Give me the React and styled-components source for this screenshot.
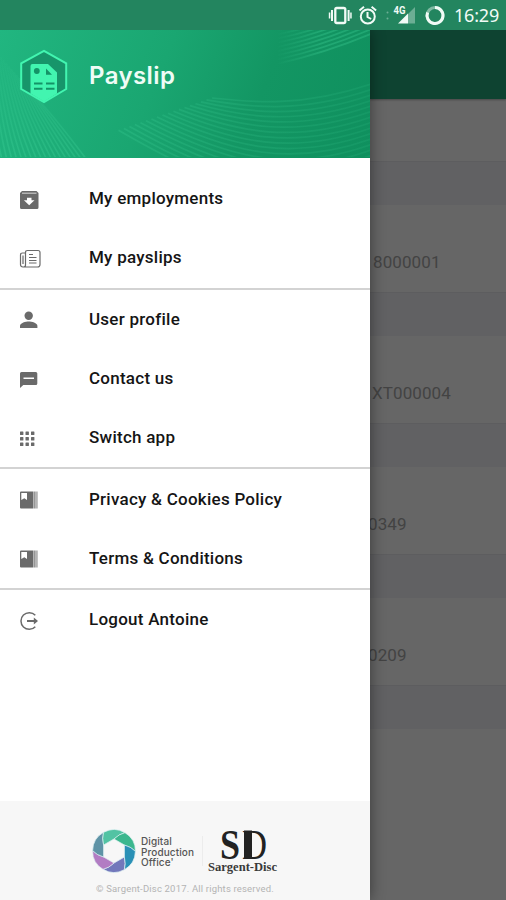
import React from 'react';
import styled, { createGlobalStyle } from 'styled-components';

const GlobalStyle = createGlobalStyle`
  * {
    box-sizing: border-box;
  }
  body {
    margin: 0;
    font-family: Roboto, sans-serif;
  }
`;

const StyledPhone = styled.div`
  width: 506px;
  height: 900px;
  display: flex;
  flex-direction: column;
  overflow: hidden;
`;

const StyledStatusBar = styled.header`
  height: 30px;
  flex: none;
  display: flex;
  align-items: center;
  justify-content: flex-end;
  gap: 8px;
  padding: 0 7px 0 0;
  background-color: #23855f;
  color: #f1fbf6;
  z-index: 2;

  svg {
    display: block;
  }
`;

const StyledClock = styled.span`
  font-family: 'Noto Sans', sans-serif;
  font-size: 18px;
  line-height: 30px;
  width: 45px;
  white-space: nowrap;
  letter-spacing: -0.2px;
`;

const StyledBody = styled.div`
  flex: 1;
  display: flex;
  min-height: 0;
`;

const StyledDrawer = styled.aside`
  width: 370px;
  flex: none;
  display: flex;
  flex-direction: column;
  background-color: #fff;
  box-shadow: 0 0 14px rgba(0, 0, 0, 0.45);
  z-index: 1;
`;

const StyledBanner = styled.div`
  position: relative;
  height: 127.5px;
  display: flex;
  align-items: flex-start;
  padding: 19px 0 0 19px;
  background: linear-gradient(112deg, #21b680 0%, #1aa671 42%, #139663 68%, #0f905e 100%);
`;

const StyledWaves = styled.svg`
  position: absolute;
  left: 0;
  top: 0;
`;

const StyledLogo = styled.svg`
  position: relative;
  flex: none;
`;

const StyledTitle = styled.h1`
  position: relative;
  margin: 11px 0 0 20px;
  font-family: Inter, sans-serif;
  font-size: 24px;
  font-weight: 600;
  line-height: 32px;
  letter-spacing: 0.4px;
  color: #effcf6;
`;

const StyledNav = styled.nav`
  flex: 1;
  padding-top: 11.5px;
`;

const StyledGroup = styled.div`
  border-bottom: ${({ $last }) => ($last ? 'none' : '2px solid #d3d3d3')};
`;

const StyledItem = styled.a`
  height: 59.3px;
  display: flex;
  align-items: center;
  padding: 0 0 1px 19px;
  color: #151515;
  font-size: 17px;
  font-weight: 500;
  letter-spacing: 0.25px;

  svg {
    flex: none;
    margin: 3px 48px 0 0;
    color: #6a6a6a;
  }
`;

const StyledFooter = styled.footer`
  height: 99px;
  flex: none;
  display: flex;
  flex-direction: column;
  background-color: #f7f7f7;
  padding: 28px 0 0 92px;
`;

const StyledBrands = styled.div`
  display: flex;
  height: 47px;
`;

const StyledOffice = styled.div`
  margin: 7px 0 0 5px;
  width: 61px;
  font-family: Inter, sans-serif;
  font-size: 10px;
  font-weight: 500;
  line-height: 10.6px;
  letter-spacing: 0.1px;
  color: #555;
`;

const StyledRule = styled.div`
  width: 1px;
  height: 30px;
  margin: 7px 6px 0 0;
  background-color: #ececec;
`;

const StyledCopyright = styled.small`
  margin: 7px 0 0 4px;
  font-size: 9.5px;
  line-height: 12px;
  letter-spacing: 0.18px;
  color: #b4b4b4;
  white-space: nowrap;
`;

const StyledContent = styled.main`
  flex: 1;
  min-width: 0;
  display: flex;
  flex-direction: column;
  background-color: #666;
`;

const StyledToolbar = styled.div`
  height: 69px;
  background-color: #0e4331;
  box-shadow: 0 1px 2px rgba(0, 0, 0, 0.3);
`;

const StyledSpacer = styled.div`
  height: 62px;
`;

const StyledBand = styled.div`
  height: 44px;
  background-color: #616163;
  border-top: 1px solid #5d5d5f;
`;

const StyledRecord = styled.div`
  height: 87px;
  padding-top: 26.5px;
  text-indent: ${({ $indent }) => $indent}px;
  font-size: 17px;
  line-height: 60px;
  letter-spacing: 0.1px;
  color: #434343;
`;

const records = [
  { id: '8000001', indent: 3 },
  { id: 'XT000004', indent: 2 },
  { id: '0349', indent: -2 },
  { id: '0209', indent: -2 },
];

const Icon = ({ children }) => (
  <svg width="22" height="20" viewBox="0 0 22 20" fill="currentColor">
    {children}
  </svg>
);

const EmploymentsIcon = () => (
  <Icon>
    <path
      fillRule="evenodd"
      d="M3 1h14.5L19.500 3v14.500a1.500 1.500 0 0 1-1.500 1.500H2.500A1.500 1.500 0 0 1 1 17.500V3zM3 2.700h14.500v0.800H3zM8 7.800v2.400H4.900l5.300 5 5.300-5H12.500v-2.400z"
    />
  </Icon>
);

const PayslipsIcon = () => (
  <Icon>
    <g fill="none" stroke="currentColor" strokeWidth="1.200">
      <path d="M6.500 16.500V3.500Q6.500 1.500 8.500 1.500H19Q21 1.500 21 3.500V15.500Q21 18 18.500 18H4Q1.500 18 1.500 15.500V6Q1.500 4 3.500 4H6.500M6.500 16Q6.500 18 4.500 18M4 6.500V15" />
      <path d="M10 5.500h4M10 8.500h7.500M10 11.500h7.500M10 14h7.500" />
    </g>
  </Icon>
);

const ProfileIcon = () => (
  <Icon>
    <circle cx="9.700" cy="5.700" r="4.200" />
    <path d="M1 18v-2.200c0-2.900 5.800-4.300 8.700-4.300s8.700 1.400 8.700 4.300V18z" />
  </Icon>
);

const ContactIcon = () => (
  <Icon>
    <path
      fillRule="evenodd"
      d="M2.500 2h14.300a1.500 1.500 0 0 1 1.500 1.500v10a1.500 1.500 0 0 1-1.500 1.500H4.300L1 18V3.500A1.500 1.500 0 0 1 2.500 2zM4.500 7.600v1.300h10.500v-1.300z"
    />
  </Icon>
);

const AppsIcon = () => (
  <Icon>
    {[2.5, 8, 13.5].map(y =>
      [1, 6.5, 12].map(x => (
        <rect key={`${x}-${y}`} x={x} y={y} width="3.400" height="3.400" rx="0.500" />
      ))
    )}
  </Icon>
);

const BookIcon = () => (
  <Icon>
    <path
      fillRule="evenodd"
      d="M2 1.500h12.500v17H2a1 1 0 0 1-1-1v-15a1 1 0 0 1 1-1zM2.300 3v7l3-1.800 2.700 1.800V3z"
    />
    <path d="M15.300 1.500h1.200v17h-1.200zM17.500 1.500h0.900v17h-0.900z" />
  </Icon>
);

const LogoutIcon = () => (
  <Icon>
    <g fill="none" stroke="currentColor" strokeWidth="1.500">
      <path d="M16.300 4.300A8.300 8.300 0 1 0 16.300 15.700" />
      <path d="M8 10h8" strokeWidth="2" />
    </g>
    <path d="M14.800 6.500L19 10l-4.200 3.500z" />
  </Icon>
);

const menu = [
  [
    { label: 'My employments', icon: EmploymentsIcon },
    { label: 'My payslips', icon: PayslipsIcon },
  ],
  [
    { label: 'User profile', icon: ProfileIcon },
    { label: 'Contact us', icon: ContactIcon },
    { label: 'Switch app', icon: AppsIcon },
  ],
  [
    { label: 'Privacy & Cookies Policy', icon: BookIcon },
    { label: 'Terms & Conditions', icon: BookIcon },
  ],
  [{ label: 'Logout Antoine', icon: LogoutIcon }],
];

const range = n => Array.from({ length: n }, (_, i) => i);

const Waves = () => (
  <StyledWaves width="370" height="127" viewBox="0 0 370 127" fill="none">
    <defs>
      <linearGradient id="fadeDown" x1="0" y1="0" x2="0" y2="127" gradientUnits="userSpaceOnUse">
        <stop offset="0.100" stopColor="#4be0a5" stopOpacity="0" />
        <stop offset="1" stopColor="#4be0a5" stopOpacity="0.240" />
      </linearGradient>
      <linearGradient id="fadeRight" x1="115" y1="0" x2="370" y2="0" gradientUnits="userSpaceOnUse">
        <stop offset="0" stopColor="#4be0a5" stopOpacity="0.180" />
        <stop offset="1" stopColor="#4be0a5" stopOpacity="0.100" />
      </linearGradient>
      <linearGradient id="fadeTop" x1="276" y1="0" x2="320" y2="0" gradientUnits="userSpaceOnUse">
        <stop offset="0" stopColor="#4be0a5" stopOpacity="0" />
        <stop offset="1" stopColor="#4be0a5" stopOpacity="0.260" />
      </linearGradient>
    </defs>
    <g stroke="url(#fadeDown)" strokeWidth="1.600">
      {range(18).map(i => (
        <path key={i} d={`M${i * 2.6 - 12} ${12 + i * 3}Q${i * 3.6 - 8} 85 ${i * 5 + 2} 130`} />
      ))}
    </g>
    <g stroke="url(#fadeRight)" strokeWidth="1.700">
      {range(18).map(i => (
        <path
          key={i}
          d={`M${212 - i * 5.5} ${68 + i * 1.9}C${250 - i * 2} ${72 + i * 5} ${300 - i} ${78 + i * 6} 371 ${54 + i * 5.5}`}
        />
      ))}
    </g>
    <g stroke="url(#fadeTop)" strokeWidth="1.800">
      {range(9).map(i => (
        <path key={i} d={`M278 ${i * 4.2}Q325 ${i * 4 - 9} 371 ${i * 4.6 - 33}`} />
      ))}
    </g>
  </StyledWaves>
);

const PayslipLogo = () => (
  <StyledLogo width="50" height="56" viewBox="0 0 50 56">
    <path d="M25 1.800L47.200 14.300V40L25 53L2.200 40V14.300z" fill="#17956a" stroke="#42f5b0" strokeWidth="2" />
    <path d="M11.500 44.500V17q0-2 2-2H29L38 23.500V44.500L25 52.500z" fill="#42f5b0" />
    <circle cx="17.800" cy="22" r="2.900" fill="#149367" />
    <path d="M27 19.500v6.300h6z" fill="#149367" />
    <g stroke="#149367" strokeWidth="1.900">
      <path d="M15 34.500h8.500M27 34.500h8.500M15 39.800h8.500M27 39.800h8.500" />
    </g>
  </StyledLogo>
);

// clockwise from the bottom
const blades = ['#7278bb', '#b27cc3', '#5f93a6', '#52c3a3', '#3bb78e', '#2a90b6'];

const Aperture = () => (
  <svg width="44" height="44" viewBox="-22 -22 44 44">
    {blades.map((color, i) => (
      <path
        key={color}
        d="M12 0Q17 5 18.350 11A21.400 21.400 0 0 1 -0.350 21.400Q4 17 6 10.400z"
        fill={color}
        stroke="#dff0f2"
        strokeWidth="0.700"
        transform={`rotate(${i * 60 + 30})`}
      />
    ))}
  </svg>
);

const StyledSargent = styled.svg`
  overflow: visible;
`;

const SargentDisc = () => (
  <StyledSargent width="70" height="47" viewBox="0 0 70 47" fontFamily="Liberation Serif, serif" fill="#222">
    <text x="11" y="30" fontSize="42" fontWeight="700" textLength="20" lengthAdjust="spacingAndGlyphs">
      S
    </text>
    <text x="33" y="30" fontSize="43" textLength="25" lengthAdjust="spacingAndGlyphs">
      D
    </text>
    <rect x="35" y="1.500" width="8" height="28.500" />
    <text x="-1" y="42" fontSize="12.500" fontWeight="700" fill="#3a3a3a" textLength="69" lengthAdjust="spacingAndGlyphs">
      Sargent-Disc
    </text>
  </StyledSargent>
);

const StatusIcons = () => (
  <svg width="118" height="28" viewBox="328 1 118 28" fill="currentColor">
    {/* vibrate */}
    <rect x="335.300" y="8" width="10" height="15" rx="1.500" fill="none" stroke="currentColor" strokeWidth="2.300" />
    <path d="M331 10h2v11H331zM328.800 12.500h1.500v6h-1.500zM347.600 10h2v11h-2zM350.200 12.500h1.500v6h-1.500z" />
    {/* alarm */}
    <g fill="none" stroke="currentColor" strokeWidth="2">
      <circle cx="367.800" cy="16.500" r="7" />
      <path d="M359.500 10.500l4.500-3.700M371.600 6.800l4.500 3.700M367.500 12v5l3.600 2" />
    </g>
    <g opacity="0.350">
      <circle cx="387.500" cy="12.500" r="1" />
      <circle cx="387.500" cy="18.500" r="1" />
      <path d="M415 7v16.500h-7V14z" />
    </g>
    <path d="M398 23.500L408 13.500v10z" />
    <text x="393.500" y="14.300" fontFamily="Roboto, sans-serif" fontSize="10" fontWeight="700" textLength="12" lengthAdjust="spacingAndGlyphs">
      4G
    </text>
    <circle cx="435" cy="15.500" r="8" fill="none" stroke="currentColor" strokeWidth="3" opacity="0.450" />
    <path d="M435 7.500A8 8 0 1 1 427.600 12.500" fill="none" stroke="currentColor" strokeWidth="3" />
  </svg>
);

function App() {
  return (
    <>
      <GlobalStyle />
      <StyledPhone>
        <StyledStatusBar>
          <StatusIcons />
          <StyledClock>16:29</StyledClock>
        </StyledStatusBar>
        <StyledBody>
          <StyledDrawer>
            <StyledBanner>
              <Waves />
              <PayslipLogo />
              <StyledTitle>Payslip</StyledTitle>
            </StyledBanner>
            <StyledNav>
              {menu.map((group, index) => (
                <StyledGroup key={group[0].label} $last={index === menu.length - 1}>
                  {group.map(({ label, icon: ItemIcon }) => (
                    <StyledItem key={label}>
                      <ItemIcon />
                      {label}
                    </StyledItem>
                  ))}
                </StyledGroup>
              ))}
            </StyledNav>
            <StyledFooter>
              <StyledBrands>
                <Aperture />
                <StyledOffice>
                  Digital
                  <br />
                  Production
                  <br />
                  Office'
                </StyledOffice>
                <StyledRule />
                <SargentDisc />
              </StyledBrands>
              <StyledCopyright>© Sargent-Disc 2017. All rights reserved.</StyledCopyright>
            </StyledFooter>
          </StyledDrawer>
          <StyledContent>
            <StyledToolbar />
            <StyledSpacer />
            {records.map(({ id, indent }) => (
              <React.Fragment key={id}>
                <StyledBand />
                <StyledRecord $indent={indent}>{id}</StyledRecord>
              </React.Fragment>
            ))}
            <StyledBand />
          </StyledContent>
        </StyledBody>
      </StyledPhone>
    </>
  );
}

export default App;
